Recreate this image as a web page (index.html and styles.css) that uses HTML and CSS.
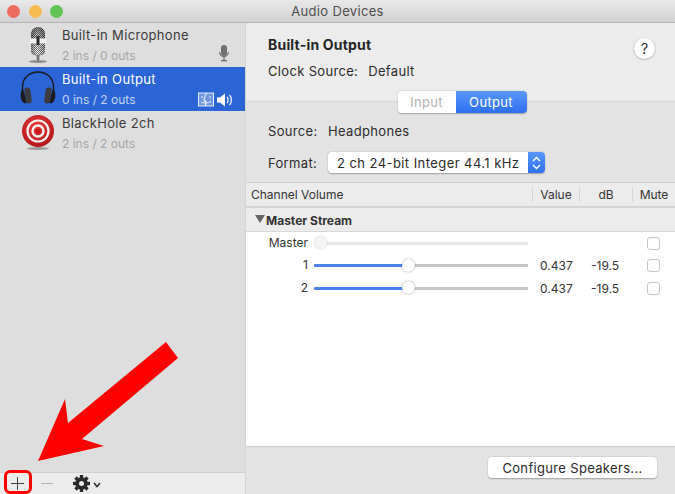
FILE: index.html
```html
<!DOCTYPE html>
<html lang="en">
<head>
<meta charset="utf-8">
<title>Audio Devices</title>
<link rel="stylesheet" href="styles.css">
</head>
<body>
<div class="window">
  <header class="titlebar">
    <div class="lights"><span class="light red"></span><span class="light yellow"></span><span class="light green"></span></div>
    <div class="title">Audio Devices</div>
  </header>
  <div class="main">
    <aside class="sidebar">
      <ul class="devices">
        <li class="device">
          <svg class="dev-icon" width="40" height="44" viewBox="0 0 40 44">
            <defs>
              <pattern id="mesh" width="2" height="2" patternUnits="userSpaceOnUse"><rect width="2" height="2" fill="#f2f2f2"/><rect width="1" height="1" fill="#333"/><rect x="1" y="1" width="1" height="1" fill="#444"/></pattern>
              <linearGradient id="stand" x1="0" x2="1" y1="0" y2="0"><stop offset="0" stop-color="#d8d8d8"/><stop offset=".5" stop-color="#555"/><stop offset="1" stop-color="#ccc"/></linearGradient>
              <linearGradient id="sheen" x1="0" x2="1" y1="0" y2="0"><stop offset="0" stop-color="#000" stop-opacity=".4"/><stop offset=".45" stop-color="#fff" stop-opacity=".25"/><stop offset="1" stop-color="#000" stop-opacity=".35"/></linearGradient>
              <linearGradient id="dome" x1="0" x2="0" y1="0" y2="1"><stop offset="0" stop-color="#333" stop-opacity=".55"/><stop offset=".35" stop-color="#333" stop-opacity=".2"/><stop offset="1" stop-color="#fff" stop-opacity=".1"/></linearGradient>
            </defs>
            <ellipse cx="20" cy="38.500" rx="9" ry="1.400" fill="#8a8a8a"/>
            <rect x="18" y="31" width="4" height="7.500" fill="url(#stand)"/>
            <path d="M13.500 28c1 5 12 5 13 0" fill="none" stroke="#777" stroke-width="1.400"/>
            <rect x="13" y="4" width="14" height="28" rx="7" fill="url(#mesh)"/>
            <rect x="13" y="4" width="14" height="28" rx="7" fill="url(#sheen)"/>
            <rect x="13" y="4" width="14" height="28" rx="7" fill="url(#dome)"/>
            <rect x="12" y="15.500" width="16" height="5" fill="#f0f0f0"/>
            <rect x="18.500" y="13" width="3" height="9" fill="#2a2a2a"/>
          </svg>
          <div class="dev-text"><div class="dev-name">Built-in Microphone</div><div class="dev-sub">2 ins / 0 outs</div></div>
          <div class="dev-flags mic-flag">
            <svg width="10" height="17" viewBox="0 0 10 17"><rect x="2" y="0" width="6" height="11" rx="3" fill="#6f6f6f"/><path d="M.7 7c0 6 8.600 6 8.600 0" fill="none" stroke="#6f6f6f" stroke-width="1.200"/><rect x="4.300" y="11" width="1.400" height="4" fill="#6f6f6f"/><rect x="2" y="15" width="6" height="1.400" fill="#6f6f6f"/></svg>
          </div>
        </li>
        <li class="device selected">
          <svg class="dev-icon" width="40" height="44" viewBox="0 0 40 44">
            <path d="M4.500 26V20C4.500 0 35.500 0 35.500 20V26" fill="none" stroke="#1a1a22" stroke-width="1.500"/>
            <path d="M5 22c-3 1-3.500 12 1 14 1 .5 2.500 .3 3-.5z" fill="#1b1b1f"/>
            <path d="M35 22c3 1 3.500 12-1 14-1 .5-2.500 .3-3-.5z" fill="#1b1b1f"/>
            <rect x="7" y="20.500" width="6" height="16" rx="3" transform="rotate(-8 10 28)" fill="#3b3b40"/>
            <rect x="27" y="20.500" width="6" height="16" rx="3" transform="rotate(8 30 28)" fill="#3b3b40"/>
          </svg>
          <div class="dev-text"><div class="dev-name">Built-in Output</div><div class="dev-sub">0 ins / 2 outs</div></div>
          <div class="dev-flags">
            <svg width="16" height="15" viewBox="0 0 16 15"><rect x=".5" y="1" width="15" height="13" fill="#6f97e0" stroke="#e6eefc"/><path d="M8.500 1C6.500 5 6 7 6 9H8L7.500 14" fill="none" stroke="#fff"/><circle cx="4" cy="5" r=".8" fill="#fff"/><circle cx="12" cy="5" r=".8" fill="#fff"/><path d="M3 10c2 1.500 7 1.500 10-.5" fill="none" stroke="#fff" stroke-width=".8"/></svg>
            <svg class="speaker" width="16" height="14" viewBox="0 0 16 14"><path d="M0 4.500H3L8 .5V13.500L3 9.500H0z" fill="#fff"/><path d="M10 4c1.500 1.500 1.500 4.500 0 6M12.500 2c2.500 2.500 2.500 7.500 0 10" fill="none" stroke="#fff" stroke-width="1.200"/></svg>
          </div>
        </li>
        <li class="device">
          <svg class="dev-icon" width="40" height="44" viewBox="0 0 40 44">
            <defs><radialGradient id="tg" cx=".45" cy=".35" r=".8"><stop offset="0" stop-color="#ea3a3a"/><stop offset="1" stop-color="#a80f14"/></radialGradient></defs>
            <ellipse cx="20" cy="37.500" rx="11" ry="1.500" fill="#9a9a9a"/>
            <circle cx="20" cy="20" r="16" fill="url(#tg)"/>
            <circle cx="20" cy="20" r="10.500" fill="none" stroke="#f6f1f1" stroke-width="2.200"/>
            <circle cx="20" cy="20" r="5.500" fill="none" stroke="#f6f1f1" stroke-width="2.400"/>
            <circle cx="20" cy="20" r="2.600" fill="#c8171c"/>
          </svg>
          <div class="dev-text"><div class="dev-name">BlackHole 2ch</div><div class="dev-sub">2 ins / 2 outs</div></div>
        </li>
      </ul>
      <footer class="side-bar">
        <span class="tool plus"></span>
        <span class="tool minus"></span>
        <svg class="gear" width="17" height="17" viewBox="0 0 17 17">
          <g fill="#2a2a2a"><rect x="6.800" y="0" width="3.400" height="17"/><rect x="6.800" y="0" width="3.400" height="17" transform="rotate(45 8.500 8.500)"/><rect x="6.800" y="0" width="3.400" height="17" transform="rotate(90 8.500 8.500)"/><rect x="6.800" y="0" width="3.400" height="17" transform="rotate(135 8.500 8.500)"/></g>
          <circle cx="8.500" cy="8.500" r="4.700" fill="none" stroke="#2a2a2a" stroke-width="3"/>
          <circle cx="8.500" cy="8.500" r="2.500" fill="#ececec"/>
        </svg>
        <svg class="chev" width="8" height="6" viewBox="0 0 8 6"><path d="M1 1l3 3.500L7 1" fill="none" stroke="#2a2a2a" stroke-width="1.500"/></svg>
      </footer>
    </aside>
    <section class="detail">
      <div class="head">
        <div class="head-text">
          <div class="head-title">Built-in Output</div>
          <div class="head-clock"><span>Clock Source:</span><span>Default</span></div>
        </div>
        <div class="help">?</div>
      </div>
      <div class="tabs"><span class="tab">Input</span><span class="tab active">Output</span></div>
      <div class="form">
        <div class="form-row source"><span class="form-label">Source:</span><span>Headphones</span></div>
        <div class="form-row format"><span class="form-label">Format:</span>
          <div class="select"><span class="select-text">2 ch 24-bit Integer 44.1 kHz</span>
            <span class="select-arrows"><svg width="9" height="14" viewBox="0 0 9 14"><path d="M1 5l3.500-3.500L8 5M1 9l3.500 3.500L8 9" fill="none" stroke="#fff" stroke-width="1.400"/></svg></span>
          </div>
        </div>
      </div>
      <div class="table">
        <div class="thead"><span class="th first">Channel Volume</span><span class="th">Value</span><span class="th">dB</span><span class="th">Mute</span></div>
        <div class="group"><span class="tri"></span>Master Stream</div>
        <div class="rows">
          <div class="row"><span class="r-label">Master</span><div class="slider off"><span class="thumb"></span></div><span></span><span></span><span class="check"></span></div>
          <div class="row"><span class="r-label">1</span><div class="slider"><span class="fill"></span><span class="thumb"></span></div><span class="val">0.437</span><span>-19.5</span><span class="check"></span></div>
          <div class="row"><span class="r-label">2</span><div class="slider"><span class="fill"></span><span class="thumb"></span></div><span class="val">0.437</span><span>-19.5</span><span class="check"></span></div>
        </div>
      </div>
      <div class="foot"><button class="btn">Configure Speakers...</button></div>
    </section>
  </div>
  <svg class="arrow" width="675" height="494" viewBox="0 0 675 494"><polygon points="38,461 65,399 68,423 166,342 178,358 82,439 104,446" fill="#fe0000"/></svg>
  <div class="callout"></div>
</div>
</body>
</html>
```
FILE: styles.css
```css
* { box-sizing: border-box; }
html, body { margin: 0; padding: 0; }
body { font-family: Inter, "Liberation Sans", sans-serif; font-size: 13px; letter-spacing: .33px; color: #2b2b2b; overflow: hidden; }
.window { position: relative; width: 675px; height: 494px; display: flex; flex-direction: column; overflow: hidden; }

.titlebar { height: 23px; flex: none; display: grid; grid-template-columns: 1fr auto 1fr; align-items: center; background: linear-gradient(#e9e9e9, #d2d2d2); border-bottom: 1px solid #b4b4b4; }
.lights { display: flex; gap: 8.500px; padding-left: 7px; }
.light { width: 13px; height: 13px; border-radius: 50%; }
.red { background: #ee6a5f; }
.yellow { background: #f5bd4f; }
.green { background: #61c454; }
.title { font-size: 13px; color: #4e4e4e; }

.main { flex: 1; display: grid; grid-template-columns: 245px 1fr; min-height: 0; }
.sidebar { background: #dedede; display: flex; flex-direction: column; }
.devices { list-style: none; margin: 0; padding: 0; flex: 1; }
.device { height: 44px; display: flex; align-items: stretch; padding-left: 18px; }
.device.selected { background: #2a64d5; color: #fff; }
.dev-icon { flex: none; }
.dev-text { margin-left: 4px; padding-top: 4px; flex: 1; }
.dev-name { font-size: 13px; line-height: 16px; color: #3a3a3a; }
.dev-sub { font-size: 12px; line-height: 15px; margin-top: 5px; color: #a6a6a6; letter-spacing: 0; }
.selected .dev-name { color: #fff; }
.selected .dev-sub { color: #c4d4f2; }
.dev-flags { display: flex; align-items: flex-end; justify-content: flex-end; gap: 3px; padding: 0 12px 4px 0; }
.mic-flag { padding: 0 16px 5px 0; }
.speaker { margin-bottom: .5px; }

.side-bar { height: 22px; flex: none; background: #ececec; border-top: 1px solid #cfcfcf; display: flex; align-items: center; }
.tool.plus { width: 13px; height: 13px; margin-left: 11px; background: linear-gradient(#444, #444) center / 13px 1px no-repeat, linear-gradient(#444, #444) center / 1px 13px no-repeat; }
.tool.minus { width: 12px; height: 1px; margin-left: 17px; background: #b0b0b0; }
.gear { margin-left: 20px; }
.chev { margin-left: 3px; margin-top: 2px; }

.detail { display: flex; flex-direction: column; min-height: 0; background: #e3e3e3; border-left: 1px solid #d4d4d4; }
.head { height: 79px; flex: none; background: #ececec; border-bottom: 1px solid #d6d6d6; display: flex; justify-content: space-between; padding: 14px 20px 0 22px; }
.head-title { font-weight: 700; font-size: 14px; letter-spacing: .2px; line-height: 16px; color: #252525; }
.head-clock { display: flex; gap: 10px; margin-top: 10px; line-height: 16px; }
.help { width: 21px; height: 21px; margin-top: 1px; border-radius: 50%; background: #fff; box-shadow: 0 .5px 2px rgba(0,0,0,.35); display: flex; align-items: center; justify-content: center; font-size: 14px; letter-spacing: 0; }

.tabs { align-self: center; display: flex; height: 22px; margin: -11px 0 0 3px; position: relative; border-radius: 4px; box-shadow: 0 .5px 1.500px rgba(0,0,0,.3); font-size: 13px; }
.tab { width: 58px; background: #fff; color: #b4b4b4; display: flex; align-items: center; justify-content: center; border-radius: 4px 0 0 4px; }
.tab.active { width: 71px; background: linear-gradient(#5a97fb, #2d6ff0); color: #fff; border-radius: 0 4px 4px 0; }

.form { padding: 7px 0 0 22px; height: 69px; flex: none; }
.form-row { display: flex; align-items: center; }
.source { height: 22px; margin-bottom: 10px; }
.format { height: 21px; }
.form-label { width: 60px; flex: none; }
.select { width: 217px; height: 21px; background: #fff; border-radius: 4px; box-shadow: 0 .5px 1.500px rgba(0,0,0,.3); display: flex; justify-content: space-between; align-items: center; overflow: hidden; }
.select-text { padding-left: 9px; font-size: 13px; letter-spacing: .43px; white-space: nowrap; }
.select-arrows { width: 17px; height: 21px; flex: none; background: linear-gradient(#5a97fb, #2d6ff0); display: flex; align-items: center; justify-content: center; }

.table { flex: 1; display: flex; flex-direction: column; background: #fff; min-height: 0; border-top: 1px solid #cfcfcf; }
.thead { height: 25px; flex: none; background: #ececec; border-bottom: 2px solid #d4d4d4; display: grid; grid-template-columns: 286px 47px 53px 1fr; align-items: center; font-size: 12px; letter-spacing: 0; color: #333; }
.th { text-align: center; border-left: 1px solid #d6d6d6; line-height: 15px; }
.th.first { text-align: left; padding-left: 5px; border-left: 0; }
.group { height: 24px; flex: none; background: #ececec; border-bottom: 1px solid #d8d8d8; display: flex; align-items: center; padding: 1px 0 0 9px; font-weight: 700; font-size: 12px; letter-spacing: 0; color: #333; }
.tri { width: 0; height: 0; border: 5px solid transparent; border-top: 8px solid #666; border-bottom: 0; margin-right: 1px; margin-top: -2px; }
.rows { flex: 1; }
.row { height: 22.500px; display: grid; grid-template-columns: 62px 220px 63px 56px 1fr; align-items: center; font-size: 12px; letter-spacing: 0; color: #333; }
.r-label { text-align: right; margin-top: -2px; }
.val { padding-left: 12px; }
.slider { position: relative; height: 14px; margin-left: 6px; background: linear-gradient(#c8c8c8, #c8c8c8) center / 100% 3px no-repeat; }
.slider.off { background-image: linear-gradient(#e8e8e8, #e8e8e8); }
.fill { position: absolute; left: 0; top: 5.500px; height: 3px; width: 94px; background: #4a80ee; border-radius: 2px 0 0 2px; }
.thumb { position: absolute; left: 88px; top: 0; width: 13px; height: 13px; border-radius: 50%; background: #fff; box-shadow: 0 0 1.500px rgba(0,0,0,.5); }
.off .thumb { left: 0; background: #f4f4f4; box-shadow: 0 0 1.500px rgba(0,0,0,.25); }
.check { width: 13px; height: 13px; border-radius: 3px; background: #fff; border: 1px solid #c6c6c6; }

.foot { height: 48px; flex: none; background: #e3e3e3; border-top: 1px solid #d0d0d0; display: flex; justify-content: flex-end; padding: 10px 18px 0 0; }
.btn { width: 169px; height: 21px; padding: 0; border: 0; border-radius: 4px; background: #fff; box-shadow: 0 .5px 1.500px rgba(0,0,0,.3); font: 13px Inter, "Liberation Sans", sans-serif; letter-spacing: .33px; color: #2b2b2b; }

.arrow { position: absolute; left: 0; top: 0; pointer-events: none; }
.callout { position: absolute; left: 4px; top: 470px; width: 28px; height: 24px; border: 3px solid #f00; border-radius: 6px; }
```
